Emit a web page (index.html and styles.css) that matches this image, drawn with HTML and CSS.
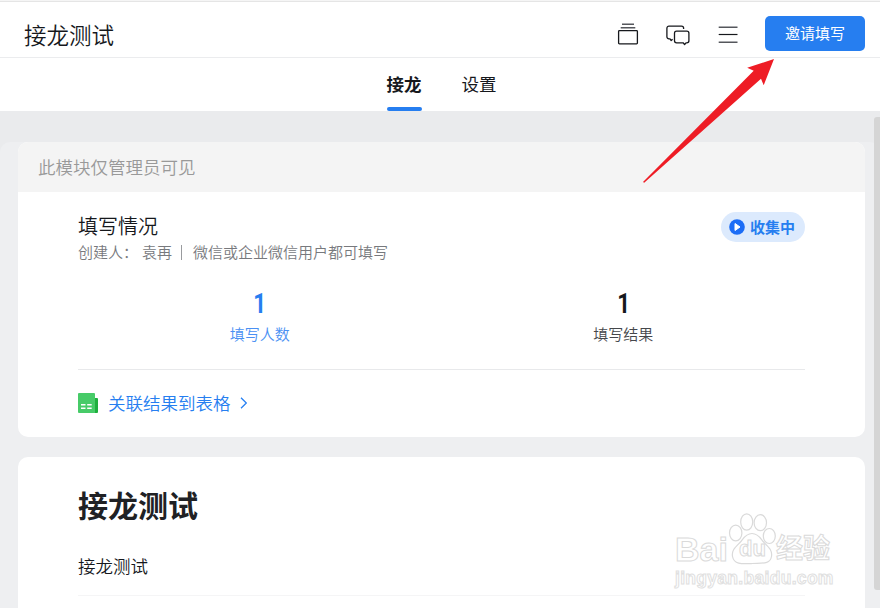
FILE: index.html
```html
<!DOCTYPE html>
<html lang="zh-CN">
    <head>
        <title>接龙测试</title>
        <meta charset="UTF-8">
        <meta name="viewport" content="width=device-width, initial-scale=1.0">
        <link rel="stylesheet" href="styles.css">
    </head>
    <body>
        <div class="header">
            <div class="header-title">接龙测试</div>
            <svg class="header-icon" width="24" height="24" viewBox="0 0 24 24" fill="none" stroke="#16181c" stroke-width="1.3">
                <path d="M6 2.3h12M4.7 5.7h14.6" stroke="#55575c" stroke-width="1.4"/>
                <rect x="2.6" y="8.6" width="18.8" height="13.2" rx="0.8"/>
            </svg>
            <svg class="header-icon" width="24" height="24" viewBox="0 0 24 24" fill="none" stroke="#16181c" stroke-width="1.3" stroke-linejoin="round">
                <path d="M17.6 7V6.2a2.1 2.1 0 0 0-2.1-2.1H3A2.1 2.1 0 0 0 .9 6.2v8.6A2.1 2.1 0 0 0 3 16.9h1l1.2 1.6 1.4-1.2"/>
                <path d="M10.6 9.1h10.2a2.1 2.1 0 0 1 2.1 2.1v7.5a2.1 2.1 0 0 1-2.1 2.1h-.8l-1.4 1.7-1.5-1.7h-6.5a2.1 2.1 0 0 1-2.1-2.1v-7.5a2.1 2.1 0 0 1 2.1-2.1z"/>
            </svg>
            <svg class="header-icon" width="24" height="24" viewBox="0 0 24 24" fill="none" stroke-width="1.4">
                <path d="M2.7 5.2h18.8M2.7 20.2h18.8" stroke="#55575c"/>
                <path d="M2.7 12.5h18.8" stroke="#16181c" stroke-width="1.2"/>
            </svg>
            <button class="invite-button">邀请填写</button>
        </div>
        <div class="tabs">
            <div class="tab tab-active">接龙</div>
            <div class="tab">设置</div>
        </div>
        <div class="content">
            <div class="card">
                <div class="card-notice">此模块仅管理员可见</div>
                <div class="card-body">
                    <div class="status-row">
                        <div>
                            <div class="status-title">填写情况</div>
                            <div class="status-meta">
                                <span>创建人：</span><span class="creator">袁再</span><span class="meta-line"></span><span>微信或企业微信用户都可填写</span>
                            </div>
                        </div>
                        <div class="badge">
                            <svg width="16" height="16" viewBox="0 0 16 16">
                                <circle cx="8" cy="8" r="7.8" fill="#1c6df6"/>
                                <path d="M6 4.5v7l5-3.5z" fill="#fff" stroke="#fff" stroke-width="1" stroke-linejoin="round"/>
                            </svg>
                            <span>收集中</span>
                        </div>
                    </div>
                    <div class="stats">
                        <div class="stat stat-blue">
                            <div class="stat-number">1</div>
                            <div class="stat-label">填写人数</div>
                        </div>
                        <div class="stat">
                            <div class="stat-number">1</div>
                            <div class="stat-label">填写结果</div>
                        </div>
                    </div>
                    <div class="sheet-link">
                        <svg width="20" height="20" viewBox="0 0 20 20">
                            <path d="M14 5h5a1 1 0 0 1 1 1v13a1 1 0 0 1-1 1h-5z" fill="#1faf3e"/>
                            <path d="M1 0h15a1 1 0 0 1 1 1v19H1a1 1 0 0 1-1-1V1a1 1 0 0 1 1-1z" fill="#47cb68"/>
                            <path d="M3 11.7h4.5M9.2 11.7h4.5M3 15.2h4.5M9.2 15.2h4.5" stroke="#fff" stroke-width="1.4"/>
                        </svg>
                        <span>关联结果到表格</span>
                        <svg width="8" height="12" viewBox="0 0 8 12" fill="none" stroke="#2680f3" stroke-width="1.3">
                            <path d="M1 .8L6.3 6 1 11.2"/>
                        </svg>
                    </div>
                </div>
            </div>
            <div class="card form-card">
                <h1 class="form-title">接龙测试</h1>
                <div class="form-text">接龙测试</div>
            </div>
        </div>
        <div class="scrollbar"></div>
        <svg class="arrow" width="140" height="130" viewBox="0 0 140 130">
            <path d="M134 4L107.200 12.700l6.500 3L3 127l1.200.8L121 23.700l2.700 6.500z" fill="#ee1c25"/>
        </svg>
        <div class="watermark">
            <div class="watermark-logo">
                <span class="logo-bai">Bai</span>
                <span class="logo-du">du</span>
                <span class="logo-cn">经验</span>
            </div>
            <svg class="watermark-paw" width="48" height="52" viewBox="0 0 48 52" fill="none" stroke="#dadada" stroke-width="1.2">
                <ellipse cx="7.700" cy="20" rx="6.200" ry="7.800"/>
                <ellipse cx="18.700" cy="9" rx="6" ry="8.200"/>
                <ellipse cx="32.300" cy="9.700" rx="6.200" ry="8"/>
                <ellipse cx="41.300" cy="23" rx="6" ry="7.500"/>
                <path d="M24 20.500c-7 0-9 6-12 9-5 5-8.500 8-7.500 14 1.500 8 9 7.500 19.500 7s18 1 19.500-7c1-6-2.500-9-7.500-14-3-3-5-9-12-9z"/>
            </svg>
            <div class="watermark-url">jingyan.baidu.com</div>
        </div>
    </body>
</html>
```
FILE: styles.css
```css
* {
    box-sizing: border-box;
}
body {
    margin: 0;
    height: 608px;
    overflow: hidden;
    position: relative;
    display: flex;
    flex-direction: column;
    background-color: #eaebed;
    font-family: "Noto Sans CJK SC", "Liberation Sans", sans-serif;
    font-weight: 350;
    color: #16181c;
}
.header {
    display: flex;
    align-items: center;
    height: 58px;
    flex: none;
    padding: 10px 15px 0 24px;
    background-color: #fff;
    border-bottom: 1px solid #ebecee;
    box-shadow: inset 0 1px #f5f5f5, inset 0 2px #e5e5e5;
}
.header-title {
    flex: 1;
    font-size: 22.5px;
    line-height: 30px;
}
.header-icon {
    margin-right: 26px;
}
.header-icon:nth-of-type(3) {
    margin-right: 25px;
}
.invite-button {
    width: 100px;
    height: 35px;
    padding: 0 0 2px;
    border: none;
    border-radius: 5px;
    background-color: #267ef0;
    color: #fff;
    font-family: inherit;
    font-size: 15px;
    font-weight: 400;
}
.tabs {
    display: flex;
    justify-content: center;
    gap: 40px;
    height: 53px;
    flex: none;
    padding-left: 3px;
    background-color: #fff;
}
.tab {
    height: 53px;
    font-size: 17.5px;
    font-weight: 400;
    line-height: 51px;
}
.tab-active {
    position: relative;
    font-weight: 700;
}
.tab-active::after {
    content: "";
    position: absolute;
    left: 0;
    right: 0;
    bottom: 0;
    height: 4px;
    border-radius: 2px;
    background-color: #267ef0;
}
.content {
    flex: 1;
    display: flex;
    flex-direction: column;
    gap: 20px;
    margin-top: 31px;
    padding: 0 15px 0 18px;
    border-radius: 10px 10px 0 0;
    background-color: #eeeff1;
}
.card {
    flex: none;
    border-radius: 10px;
    background-color: #fff;
    overflow: hidden;
}
.card-notice {
    height: 50px;
    padding-left: 20px;
    background-color: #f4f4f4;
    color: #999;
    font-size: 17.5px;
    line-height: 50px;
}
.card-body {
    height: 245px;
    padding: 20px 60px 0;
}
.status-row {
    display: flex;
    justify-content: space-between;
    align-items: flex-start;
}
.status-title {
    font-size: 20px;
    line-height: 28px;
}
.status-meta {
    display: flex;
    align-items: center;
    color: #77797d;
    font-size: 15px;
    line-height: 24px;
}
.creator {
    margin-left: 4px;
}
.meta-line {
    width: 1px;
    height: 15px;
    margin: 0 11px 0 9px;
    background-color: #999b9e;
}
.badge {
    display: flex;
    align-items: center;
    gap: 5px;
    width: 84px;
    height: 30px;
    padding-left: 8px;
    border-radius: 15px;
    background-color: #dceafd;
    color: #267ef0;
    font-size: 15px;
    font-weight: 700;
    line-height: 22px;
}
.badge span {
    padding-bottom: 1px;
}
.stats {
    display: flex;
    height: 106px;
    padding-top: 23px;
    border-bottom: 1px solid #e8e9eb;
}
.stat {
    flex: 1;
    text-align: center;
}
.stat-number {
    font-family: "Roboto", sans-serif;
    font-size: 28px;
    font-weight: 700;
    line-height: 34px;
    transform: scaleX(0.8);
}
.stat-label {
    color: #45474b;
    font-size: 15px;
    line-height: 26px;
}
.stat-blue .stat-number {
    color: #267ef0;
}
.stat-blue .stat-label {
    color: #4a90f3;
}
.sheet-link {
    display: flex;
    align-items: center;
    height: 66px;
    color: #267ef0;
    font-size: 17.5px;
}
.sheet-link span {
    margin: 0 9px 0 10px;
    padding-bottom: 1px;
}
.form-card {
    flex: 1;
    padding: 26px 60px 0;
    border-radius: 10px 10px 0 0;
}
.form-title {
    margin: 0;
    color: #202124;
    font-size: 30px;
    font-weight: 700;
    line-height: 42px;
}
.form-text {
    height: 71px;
    padding-top: 27px;
    border-bottom: 1px solid #f5f5f6;
    font-size: 17.5px;
    line-height: 28px;
}
.scrollbar {
    position: absolute;
    top: 117px;
    right: 0;
    width: 6px;
    height: 473px;
    border-radius: 3px 0 0 3px;
    background-color: #d5d5d5;
}
.arrow {
    position: absolute;
    left: 640px;
    top: 55px;
}
.watermark {
    position: absolute;
    left: 675px;
    top: 512px;
    width: 165px;
    height: 80px;
    color: #fff;
    font-family: "Liberation Sans", "Noto Sans CJK SC", sans-serif;
    font-weight: 700;
    -webkit-text-stroke: 1px #dadada;
}
.watermark-logo {
    display: flex;
    padding-top: 20px;
    line-height: 34px;
}
.logo-bai {
    width: 55px;
    font-size: 34px;
}
.logo-du {
    width: 46px;
    padding-left: 9px;
    font-size: 22px;
}
.logo-cn {
    font-size: 27px;
}
.watermark-paw {
    position: absolute;
    left: 53px;
    top: 1px;
}
.watermark-url {
    padding-top: 4px;
    font-family: "Liberation Sans", sans-serif;
    font-size: 17.5px;
    letter-spacing: 0.3px;
    line-height: 16px;
    -webkit-text-stroke: 1px #e0e0e0;
}
```
